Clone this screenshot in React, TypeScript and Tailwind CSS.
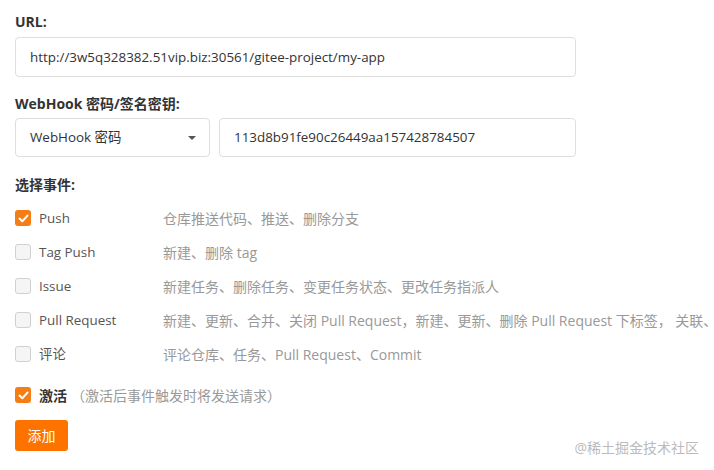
import React from "react";

const font = { fontFamily: '"Open Sans", "Noto Sans CJK SC", sans-serif' };

function Check({ checked }: { checked: boolean }) {
  if (checked) {
    return (
      <span className="flex h-4 w-4 shrink-0 items-center justify-center rounded-[3px] bg-[#f57d16]">
        <svg width="11" height="9" viewBox="0 0 11 9" fill="none">
          <path d="M1.5 4.6 L4.3 7.2 L9.5 1.6" stroke="#fff" strokeWidth="2" strokeLinecap="round" strokeLinejoin="round" />
        </svg>
      </span>
    );
  }
  return <span className="h-4 w-4 shrink-0 rounded-[3px] border border-[#d0d0d0] bg-[#f5f5f5]" />;
}

const events: [boolean, string, string][] = [
  [true, "Push", "仓库推送代码、推送、删除分支"],
  [false, "Tag Push", "新建、删除 tag"],
  [false, "Issue", "新建任务、删除任务、变更任务状态、更改任务指派人"],
  [false, "Pull Request", "新建、更新、合并、关闭 Pull Request，新建、更新、删除 Pull Request 下标签， 关联、取消关联 Issue"],
  [false, "评论", "评论仓库、任务、Pull Request、Commit"],
];

export default function App() {
  return (
    <div className="relative h-[470px] w-[714px] overflow-hidden bg-white pl-[15px] pt-[13px] text-[14px]" style={font}>
      <div className="text-[14px] font-bold leading-[18px] text-[#333]">URL:</div>
      <div className="mt-[6px] flex h-[40px] w-[561px] items-center rounded-[4px] border border-[#dedede] px-[14px] text-[13.4px] text-[#333]">
        http://3w5q328382.51vip.biz:30561/gitee-project/my-app
      </div>
      <div className="mt-[18px] text-[14px] font-bold leading-[18px] text-[#333]">WebHook 密码/签名密钥:</div>
      <div className="mt-[5px] flex gap-[9px]">
        <div className="flex h-[39px] w-[195px] items-center justify-between rounded-[4px] border border-[#dedede] pl-[14px] pr-[13px] text-[13.4px] text-[#333]">
          <span>WebHook 密码</span>
          <svg width="8" height="4" viewBox="0 0 8 4"><path d="M0 0 L8 0 L4 4 Z" fill="#555" /></svg>
        </div>
        <div className="flex h-[39px] w-[357px] items-center rounded-[4px] border border-[#dedede] px-[14px] text-[13.4px] text-[#333]">
          113d8b91fe90c26449aa157428784507
        </div>
      </div>
      <div className="mt-[19px] text-[14px] font-bold leading-[18px] text-[#333]">选择事件:</div>
      <div className="mt-[7px] flex flex-col">
        {events.map(([c, label, desc]) => (
          <div key={label} className="flex h-[34px] items-center whitespace-nowrap">
            <Check checked={c} />
            <span className="ml-[8px] w-[124px] shrink-0 text-[13.4px] text-[#555]">{label}</span>
            <span className="text-[14px] text-[#999]">{desc}</span>
          </div>
        ))}
      </div>
      <div className="mt-[7px] flex h-[34px] items-center whitespace-nowrap">
        <Check checked />
        <span className="ml-[8px] text-[14px] font-bold text-[#333]">激活</span>
        <span className="ml-[4px] text-[14px] text-[#999]">（激活后事件触发时将发送请求）</span>
      </div>
      <button className="mt-[8px] flex h-[31px] w-[53px] items-center justify-center rounded-[3px] bg-[#fe7300] text-[14px] text-white">
        添加
      </button>
      <div className="absolute bottom-[12px] right-[15px] text-[14px] text-[#bbb]">@稀土掘金技术社区</div>
    </div>
  );
}
